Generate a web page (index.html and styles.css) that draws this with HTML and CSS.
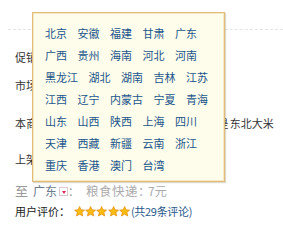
FILE: index.html
```html
<!DOCTYPE html>
<html>
<head>
<meta charset="utf-8">
<link rel="stylesheet" href="styles.css">
</head>
<body>
<div class="page">
  <div class="rule"></div>
  <div class="row row-a">促销信息：暂无</div>
  <div class="row row-b">市场价格：￥58.00</div>
  <div class="row row-c"><span class="lead">本商品由黑龙江五常产地直供，其米品种是</span><span class="tail">东北大米</span></div>
  <div class="row row-d">上架时间：2012-08-16</div>
  <div class="row row-e">
    <span class="to">至</span>
    <span class="prov">广东</span>
    <span class="drop"></span>
    <span class="colon">：</span>
    <span class="ship">粮食快递：</span><span class="ship-n">7元</span>
  </div>
  <div class="row row-f">
    <span class="lab">用户评价：</span>
    <span class="stars">
      <svg class="star" viewBox="0 0 12 12"><path d="M6 0.6 L7.6 4.1 L11.4 4.5 L8.5 7 L9.4 10.9 L6 8.9 L2.6 10.9 L3.5 7 L0.6 4.5 L4.4 4.1 Z"/></svg>
      <svg class="star" viewBox="0 0 12 12"><path d="M6 0.6 L7.6 4.1 L11.4 4.5 L8.5 7 L9.4 10.9 L6 8.9 L2.6 10.9 L3.5 7 L0.6 4.5 L4.4 4.1 Z"/></svg>
      <svg class="star" viewBox="0 0 12 12"><path d="M6 0.6 L7.6 4.1 L11.4 4.5 L8.5 7 L9.4 10.9 L6 8.9 L2.6 10.9 L3.5 7 L0.6 4.5 L4.4 4.1 Z"/></svg>
      <svg class="star" viewBox="0 0 12 12"><path d="M6 0.6 L7.6 4.1 L11.4 4.5 L8.5 7 L9.4 10.9 L6 8.9 L2.6 10.9 L3.5 7 L0.6 4.5 L4.4 4.1 Z"/></svg>
      <svg class="star" viewBox="0 0 12 12"><path d="M6 0.6 L7.6 4.1 L11.4 4.5 L8.5 7 L9.4 10.9 L6 8.9 L2.6 10.9 L3.5 7 L0.6 4.5 L4.4 4.1 Z"/></svg>
    </span>
    <span class="count">(共29条评论)</span>
  </div>

  <div class="popup">
    <div class="prow"><a>北京</a><a>安徽</a><a>福建</a><a>甘肃</a><a>广东</a></div>
    <div class="prow"><a>广西</a><a>贵州</a><a>海南</a><a>河北</a><a>河南</a></div>
    <div class="prow"><a>黑龙江</a><a>湖北</a><a>湖南</a><a>吉林</a><a>江苏</a></div>
    <div class="prow"><a>江西</a><a>辽宁</a><a>内蒙古</a><a>宁夏</a><a>青海</a></div>
    <div class="prow"><a>山东</a><a>山西</a><a>陕西</a><a>上海</a><a>四川</a></div>
    <div class="prow"><a>天津</a><a>西藏</a><a>新疆</a><a>云南</a><a>浙江</a></div>
    <div class="prow"><a>重庆</a><a>香港</a><a>澳门</a><a>台湾</a></div>
  </div>
</div>
</body>
</html>
```

FILE: styles.css
```css
html, body {
  margin: 0;
  padding: 0;
  background: #fff;
}
body {
  font-family: "Noto Sans CJK SC", "Liberation Sans", sans-serif;
  font-size: 11px;
  color: #333;
}
.page {
  position: relative;
  width: 283px;
  height: 229px;
  overflow: hidden;
  padding-top: 29px;
  box-sizing: border-box;
}
.rule {
  margin-left: 8px;
  border-top: 1px dashed #e4e4e4;
}
.row {
  padding-left: 15px;
  height: 20px;
  line-height: 20px;
  white-space: nowrap;
  display: flex;
  align-items: center;
}
.row-a { margin-top: 17px; }
.row-b { margin-top: 8px; }
.row-c { margin-top: 18px; }
.lead { letter-spacing: 0.25px; }
.tail { margin-left: 1px; }
.row-d { margin-top: 16px; }
.row-e { margin-top: 12px; }
.row-f { margin-top: 0; }
.to {
  font-size: 13px;
  color: #999;
  margin-right: 5px;
}
.prov {
  font-size: 12px;
  color: #6b7a8c;
}
.drop {
  display: inline-block;
  width: 9px;
  height: 9px;
  border: 1px solid #d9c9cc;
  background: #fff;
  margin-left: 2px;
  position: relative;
  box-sizing: border-box;
}
.drop::after {
  content: "";
  position: absolute;
  left: 2px;
  top: 3px;
  border-left: 2px solid transparent;
  border-right: 2px solid transparent;
  border-top: 3px solid #d6285a;
}
.colon {
  color: #999;
  font-size: 11px;
  width: 18px;
}
.ship {
  font-size: 12.5px;
  color: #aaa;
  letter-spacing: 0.5px;
}
.ship-n {
  font-size: 12px;
  color: #aaa;
  margin-left: -3px;
}
.lab { color: #222; }
.stars {
  display: flex;
  margin-left: 4px;
}
.star {
  width: 11.2px;
  height: 11px;
  fill: #fbbd12;
  stroke: #e38b0a;
  stroke-width: 0.8;
}
.count {
  color: #2b5a8a;
  margin-left: 1px;
  letter-spacing: -0.3px;
}
.popup {
  position: absolute;
  left: 32px;
  top: 12px;
  width: 193px;
  height: 170px;
  box-sizing: border-box;
  border: 1px solid #e2bd78;
  box-shadow: inset 0 0 0 1px #f6e8c4, 1px 1px 1px rgba(120, 100, 60, 0.25);
  background: #fefdec;
  padding: 9px 12px 0 12px;
}
.prow {
  display: flex;
  column-gap: 10.5px;
  height: 22px;
  align-items: center;
}
.prow a {
  font-size: 11px;
  line-height: 22px;
  color: #22558a;
  white-space: nowrap;
}
```
